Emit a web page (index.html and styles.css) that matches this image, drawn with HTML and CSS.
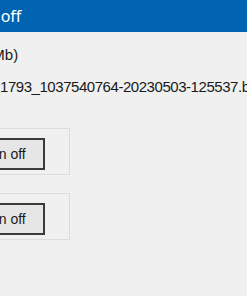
FILE: index.html
```html
<!DOCTYPE html>
<html>
<head>
<meta charset="utf-8">
<link rel="stylesheet" href="styles.css">
</head>
<body>
<div class="window">
  <div class="titlebar"><span class="title">Turn off</span></div>
  <div class="content">
    <div class="line size"><span class="size-text">Size (Mb)</span></div>
    <div class="line file">1793_1037540764-20230503-125537.bin</div>
    <div class="groups">
      <div class="group">
        <button class="btn">Turn off</button>
      </div>
      <div class="group">
        <button class="btn">Turn off</button>
      </div>
    </div>
  </div>
</div>
</body>
</html>
```
FILE: styles.css
```css
html, body {
  margin: 0;
  padding: 0;
}
body {
  width: 247px;
  height: 296px;
  overflow: hidden;
  background: #f0f0f0;
}
.window {
  width: 247px;
  height: 296px;
  overflow: hidden;
  background: #f0f0f0;
}
.titlebar {
  height: 32px;
  background: #0063b1;
  color: #ffffff;
  font-family: "Noto Sans", "Open Sans", sans-serif;
  font-size: 16px;
  line-height: 32px;
  white-space: nowrap;
  overflow: hidden;
}
.title {
  display: inline-block;
  margin-left: -38px;
}
.content {
  font-family: "Liberation Sans", Arial, sans-serif;
  color: #1a1a1a;
  padding-top: 14px;
}
.line {
  font-size: 15px;
  line-height: 18px;
  white-space: nowrap;
}
.size-text {
  display: inline-block;
  margin-left: -46px;
}
.file {
  margin-top: 14px;
  letter-spacing: -0.45px;
}
.groups {
  display: flex;
  flex-direction: column;
  gap: 18px;
  margin-top: 32px;
}
.group {
  box-sizing: border-box;
  width: 120px;
  margin-left: -50px;
  border: 1px solid #dcdcdc;
  padding: 9px 24px 4px 0;
  display: flex;
  justify-content: flex-end;
}
.btn {
  box-sizing: border-box;
  width: 86px;
  height: 32px;
  margin: 0;
  padding: 0;
  border: 2px solid #3a3a3a;
  background: #e6e6e6;
  font-family: "Liberation Sans", Arial, sans-serif;
  font-size: 14px;
  color: #1a1a1a;
}
```
